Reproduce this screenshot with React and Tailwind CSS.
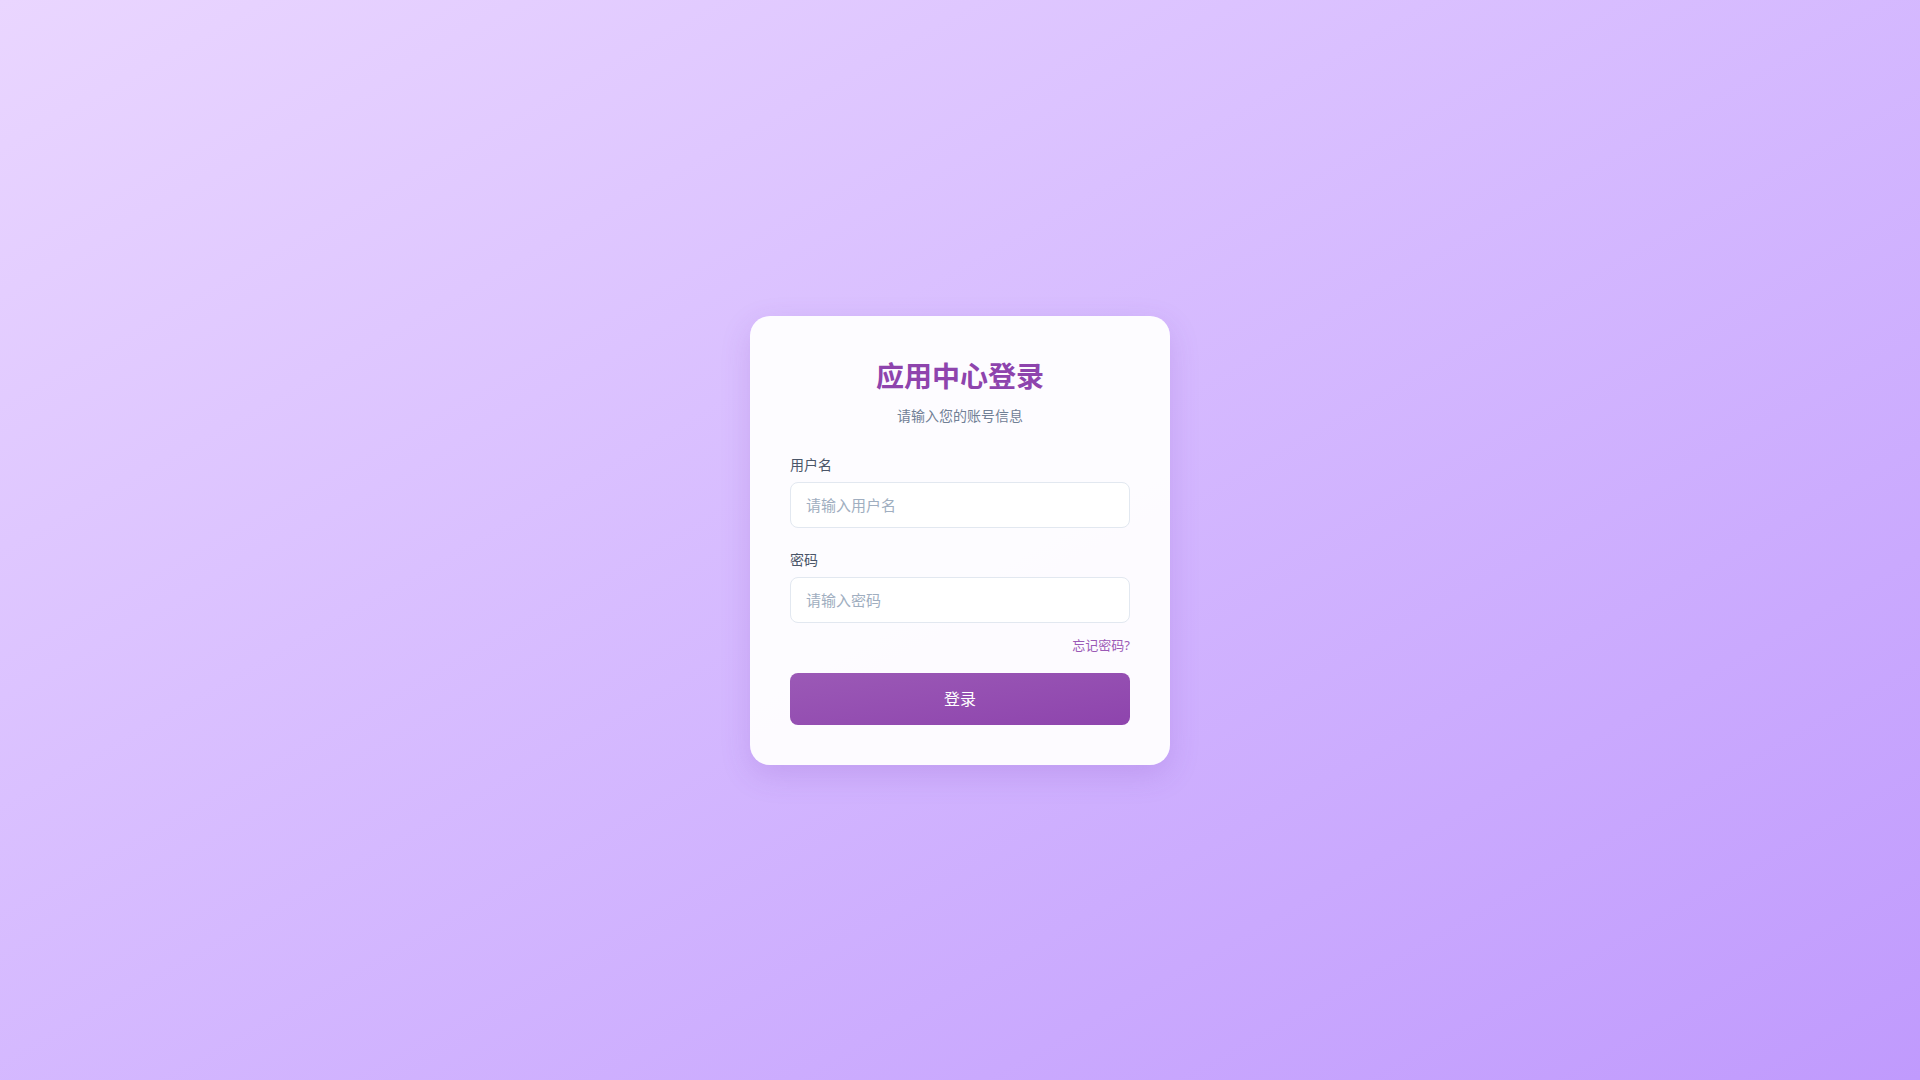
import React, { useState } from 'react';

const App = () => {
  const [username, setUsername] = useState('');
  const [password, setPassword] = useState('');

  return (
    <div
      className="min-h-screen w-full flex items-center justify-center bg-gradient-to-br from-[#ead6ff] to-[#c09afd]"
      style={{ fontFamily: '"Noto Sans", "Noto Sans CJK SC", sans-serif' }}
    >
      {/* Login card */}
      <div className="w-[420px] rounded-[20px] bg-white/95 px-10 pt-10 pb-10 shadow-[0_10px_30px_rgba(120,60,180,0.18)]">
        <div className="text-center mb-[29px]">
          <h1 className="text-[28px] leading-[40px] font-bold text-[#8e44ad]">应用中心登录</h1>
          <p className="mt-[10px] text-sm leading-5 text-[#718096]">请输入您的账号信息</p>
        </div>

        <form onSubmit={(e) => e.preventDefault()}>
          <div className="mb-[22px]">
            <label className="block text-sm leading-5 text-[#4a5568] mb-[7px]">用户名</label>
            <input
              type="text"
              value={username}
              onChange={(e) => setUsername(e.target.value)}
              placeholder="请输入用户名"
              className="block w-full h-[46px] px-[15px] rounded-lg border border-[#e2e8f0] bg-white text-[15px] text-[#2d3748] placeholder:text-[#a0aec0] outline-none focus:border-[#9b59b6]"
            />
          </div>

          <div>
            <label className="block text-sm leading-5 text-[#4a5568] mb-[7px]">密码</label>
            <input
              type="password"
              value={password}
              onChange={(e) => setPassword(e.target.value)}
              placeholder="请输入密码"
              className="block w-full h-[46px] px-[15px] rounded-lg border border-[#e2e8f0] bg-white text-[15px] text-[#2d3748] placeholder:text-[#a0aec0] outline-none focus:border-[#9b59b6]"
            />
          </div>

          <div className="mt-3 flex justify-end">
            <a href="#" className="text-[13px] leading-5 text-[#9b59b6] hover:underline">忘记密码?</a>
          </div>

          <button
            type="submit"
            className="mt-[18px] w-full h-[52px] rounded-lg bg-gradient-to-br from-[#9b59b6] to-[#8e44ad] text-white text-base"
          >
            登录
          </button>
        </form>
      </div>
    </div>
  );
};

export default App;
